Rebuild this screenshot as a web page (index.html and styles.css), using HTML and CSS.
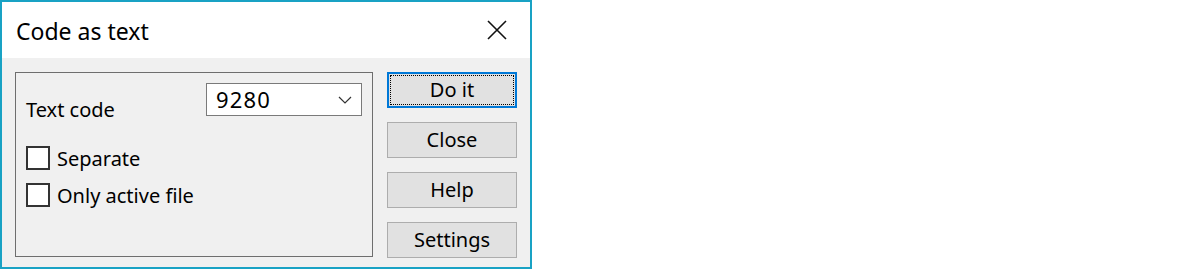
FILE: index.html
```html
<!DOCTYPE html>
<html lang="en">
<head>
    <meta charset="UTF-8">
    <title>Code as text</title>
    <link rel="stylesheet" href="styles.css">
</head>
<body>

    <div class="dialog">
        <div class="titleBar">
            <span class="titleText">Code as text</span>
            <button class="closeBtn" aria-label="Close">
                <svg width="20" height="20" viewBox="0 0 20 20">
                    <path d="M1 1 L19 19 M19 1 L1 19" stroke="#111" stroke-width="1.6" fill="none"/>
                </svg>
            </button>
        </div>
        <div class="dialogBody">
            <div class="groupBox">
                <div class="codeRow">
                    <label for="textCode">Text code</label>
                    <div class="comboBox" id="textCode">
                        <span>9280</span>
                        <svg width="14" height="8" viewBox="0 0 14 8">
                            <path d="M1 1 L7 7 L13 1" stroke="#333" stroke-width="1.2" fill="none"/>
                        </svg>
                    </div>
                </div>
                <div class="checkRow">
                    <span class="checkBox"></span>
                    <span>Separate</span>
                </div>
                <div class="checkRow">
                    <span class="checkBox"></span>
                    <span>Only active file</span>
                </div>
            </div>
            <div class="buttonColumn">
                <button class="dlgBtn defaultBtn"><span>Do it</span></button>
                <button class="dlgBtn">Close</button>
                <button class="dlgBtn">Help</button>
                <button class="dlgBtn">Settings</button>
            </div>
        </div>
    </div>

</body>
</html>
```

FILE: styles.css
```css
body {
    margin: 0;
    background: #ffffff;
    font-family: 'Noto Sans', 'Open Sans', sans-serif;
    color: #000;
}
.dialog {
    width: 528px;
    border: 2px solid #19a2c4;
    border-bottom-width: 3px;
    background: #f0f0f0;
}
.titleBar {
    height: 56px;
    background: #ffffff;
    display: flex;
    align-items: center;
    justify-content: space-between;
    padding: 0 23px 0 14px;
}
.titleText {
    font-size: 23px;
    padding-top: 1px;
}
.closeBtn {
    border: none;
    background: none;
    padding: 0;
    width: 20px;
    height: 20px;
}
.dialogBody {
    display: flex;
    gap: 14px;
    padding: 14px 13px 9px 13px;
}
.groupBox {
    border: 1px solid #6e6e6e;
    padding: 0 10px;
    box-sizing: border-box;
    width: 358px;
    height: 185px;
    font-size: 20px;
}
.codeRow {
    display: flex;
    justify-content: space-between;
    align-items: flex-end;
    margin-top: 10px;
    height: 33px;
}
.codeRow label {
    line-height: 24px;
    margin-bottom: -6px;
}
.comboBox {
    width: 156px;
    height: 33px;
    box-sizing: border-box;
    border: 1px solid #7a7a7a;
    background: #ffffff;
    display: flex;
    align-items: center;
    justify-content: space-between;
    padding: 0 9px 0 9px;
}
.comboBox span {
    font-size: 22px;
    letter-spacing: 1.2px;
    padding-bottom: 2px;
}
.checkRow {
    display: flex;
    align-items: center;
    gap: 7px;
    height: 24px;
    margin-top: 13px;
}
.codeRow + .checkRow {
    margin-top: 30px;
}
.checkBox {
    width: 24px;
    height: 24px;
    box-sizing: border-box;
    border: 2px solid #333333;
    background: #ffffff;
}
.buttonColumn {
    display: flex;
    flex-direction: column;
    gap: 14px;
}
.dlgBtn {
    width: 130px;
    height: 36px;
    border: 1px solid #adadad;
    background: #e1e1e1;
    font-family: 'Noto Sans', 'Open Sans', sans-serif;
    font-size: 20px;
    color: #000;
    padding: 0 0 2px 0;
}
.defaultBtn {
    border: 2px solid #0078d7;
    padding: 1px;
}
.defaultBtn span {
    display: flex;
    align-items: center;
    justify-content: center;
    height: 100%;
    box-sizing: border-box;
    border: 1px dotted #000;
    padding-bottom: 2px;
}
```
